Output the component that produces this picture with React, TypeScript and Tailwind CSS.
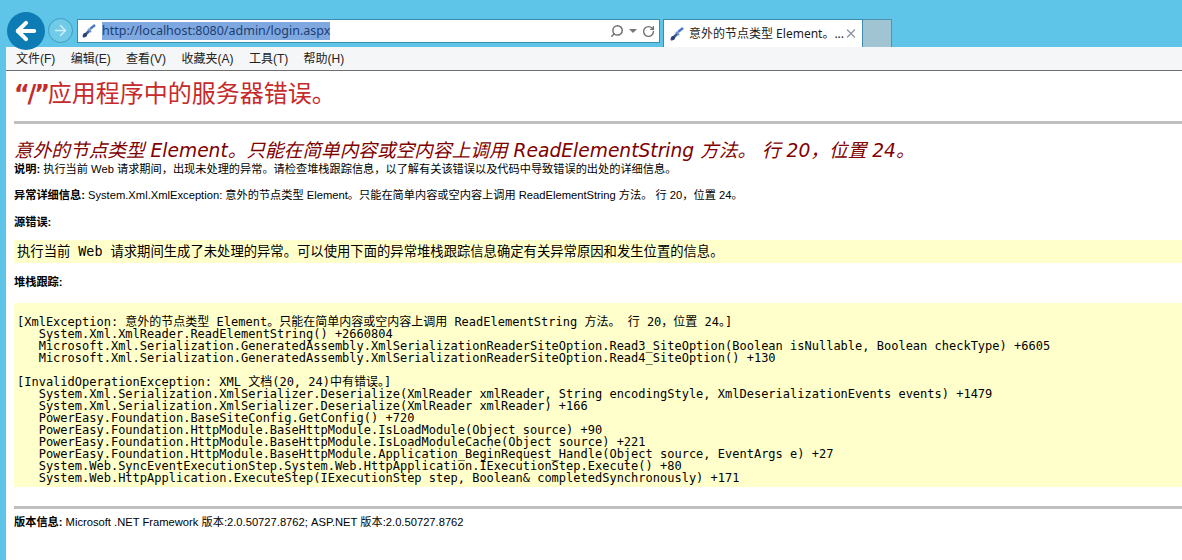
import { ArrowLeft, ArrowRight, RotateCw, Search, X } from "lucide-react";

const cjk = '"DejaVu Sans", "Noto Sans CJK SC", sans-serif';
const arial = '"Liberation Sans", "Noto Sans CJK SC", sans-serif';
const ui = '"Noto Sans", "Noto Sans CJK SC", sans-serif';
const mono = '"DejaVu Sans Mono", "Noto Sans CJK SC", monospace';

const menus = ["文件(F)", "编辑(E)", "查看(V)", "收藏夹(A)", "工具(T)", "帮助(H)"];

const stackLines = `
[XmlException: 意外的节点类型 Element。只能在简单内容或空内容上调用 ReadElementString 方法。 行 20，位置 24。]
   System.Xml.XmlReader.ReadElementString() +2660804
   Microsoft.Xml.Serialization.GeneratedAssembly.XmlSerializationReaderSiteOption.Read3_SiteOption(Boolean isNullable, Boolean checkType) +6605
   Microsoft.Xml.Serialization.GeneratedAssembly.XmlSerializationReaderSiteOption.Read4_SiteOption() +130

[InvalidOperationException: XML 文档(20, 24)中有错误。]
   System.Xml.Serialization.XmlSerializer.Deserialize(XmlReader xmlReader, String encodingStyle, XmlDeserializationEvents events) +1479
   System.Xml.Serialization.XmlSerializer.Deserialize(XmlReader xmlReader) +166
   PowerEasy.Foundation.BaseSiteConfig.GetConfig() +720
   PowerEasy.Foundation.HttpModule.BaseHttpModule.IsLoadModule(Object source) +90
   PowerEasy.Foundation.HttpModule.BaseHttpModule.IsLoadModuleCache(Object source) +221
   PowerEasy.Foundation.HttpModule.BaseHttpModule.Application_BeginRequest_Handle(Object source, EventArgs e) +27
   System.Web.SyncEventExecutionStep.System.Web.HttpApplication.IExecutionStep.Execute() +80
   System.Web.HttpApplication.ExecuteStep(IExecutionStep step, Boolean& completedSynchronously) +171`.trim();

// little IE page icon, the blue and dark strokes
const PageIcon = () => (
  <svg width="16" height="16" viewBox="0 0 16 16" className="shrink-0">
    <path d="M2 14 L6 10 L9 7" stroke="#3a5a9a" strokeWidth="2.5" fill="none" />
    <path d="M7 6 L10 9" stroke="#6f8fc8" strokeWidth="2" fill="none" />
    <path d="M9 6 L14 2" stroke="#4a78c8" strokeWidth="2.5" fill="none" />
    <circle cx="4" cy="12" r="2" fill="#27406f" />
  </svg>
);

export default function App() {
  return (
    <div
      className="w-[1182px] h-[560px] overflow-hidden bg-[#5fc5e8] flex flex-col"
      style={{ fontFamily: cjk }}
    >
      {/* browser toolbar */}
      <div className="h-[47px] shrink-0 flex items-start pl-[7px]">
        <div className="mt-[12px] w-[38px] h-[38px] rounded-full bg-[#0e7cb4] flex items-center justify-center z-10">
          <ArrowLeft size={28} strokeWidth={3.5} color="#fff" />
        </div>
        <div className="mt-[18px] ml-[3px] w-[25px] h-[25px] rounded-full border border-[#3f9cc2] bg-[#6fcbe8] flex items-center justify-center">
          <ArrowRight size={17} strokeWidth={2} color="#d3eef7" />
        </div>
        <div className="mt-[19px] ml-[4px] w-[583px] h-[24px] bg-white border border-[#3d8cad] flex items-center pl-[3px] pr-[4px]">
          <PageIcon />
          <span
            className="ml-[5px] bg-[#7fa8e0] text-[12.5px] leading-[18px] text-[#1c3f73] whitespace-nowrap"
            style={{ fontFamily: ui }}
          >
            http://localhost:8080/admin/login.aspx
          </span>
          <div className="ml-auto flex items-center gap-[3px] text-[#6f6f6f]">
            <Search size={14} strokeWidth={2.5} className="-scale-x-100" />
            <span className="w-0 h-0 border-x-[4px] border-x-transparent border-t-[4px] border-t-[#777] mx-[2px]" />
            <RotateCw size={13} strokeWidth={2.5} />
          </div>
        </div>
        <div
          className="mt-[19px] ml-[3px] w-[200px] h-[28px] bg-white border border-b-0 border-[#3d8cad] flex items-center pl-[5px] pr-[4px]"
          style={{ fontFamily: ui }}
        >
          <PageIcon />
          <span className="ml-[4px] text-[12px] text-[#1a1a1a] whitespace-nowrap">意外的节点类型 Element。...</span>
          <X size={15} strokeWidth={2.5} color="#8f9aa3" className="ml-auto" />
        </div>
        <div className="mt-[19px] w-[29px] h-[28px] bg-[#a0c4d2] border border-l-0 border-b-0 border-[#4d94ad]" />
      </div>

      {/* everything under the toolbar, with the window border at the left */}
      <div className="flex-1 ml-[6px] bg-white flex flex-col min-h-0">
        <div
          className="h-[24px] shrink-0 bg-[#f5f6f7] border-b border-[#6e6e6e] flex items-center pt-[1px] pl-[10px] gap-[15.4px] text-[12px] text-[#222]"
          style={{ fontFamily: arial }}
        >
          {menus.map((m) => (
            <span key={m}>{m}</span>
          ))}
        </div>

        <div className="pl-[8px] text-black">
          <h1 className="mt-[8px] text-[24px] leading-[30px] text-[#c62a2a] whitespace-nowrap">
            <span className="font-bold tracking-[-2.2px]">“/”</span>
            应用程序中的服务器错误。
          </h1>
          <div className="mt-[12px] h-[3px] bg-[#c0c0c0]" />
          <h2 className="mt-[15px] text-[18.67px] leading-[23px] italic text-[#800000] whitespace-nowrap">
            意外的节点类型 Element。只能在简单内容或空内容上调用 ReadElementString 方法。 行 20，位置 24。
          </h2>
          <div style={{ fontFamily: arial }}>
            <p className="text-[11.2px] leading-[14px] mt-0 whitespace-nowrap">
              <b>说明:</b> 执行当前 Web 请求期间，出现未处理的异常。请检查堆栈跟踪信息，以了解有关该错误以及代码中导致错误的出处的详细信息。
            </p>
            <p className="mt-[12px] text-[11.2px] leading-[14px] whitespace-nowrap">
              <b>异常详细信息:</b> System.Xml.XmlException: 意外的节点类型 Element。只能在简单内容或空内容上调用 ReadElementString 方法。 行 20，位置 24。
            </p>
            <p className="mt-[13px] text-[11.2px] leading-[14px] font-bold">源错误:</p>
          </div>
          <div
            className="mt-[11px] h-[23px] bg-[#ffffcc] pl-[3px] flex items-center text-[13.33px] whitespace-pre"
            style={{ fontFamily: mono }}
          >
            执行当前 Web 请求期间生成了未处理的异常。可以使用下面的异常堆栈跟踪信息确定有关异常原因和发生位置的信息。
          </div>
          <p className="mt-[12px] text-[11.2px] leading-[14px] font-bold" style={{ fontFamily: arial }}>
            堆栈跟踪:
          </p>
          <pre
            className="mt-[14px] h-[184px] bg-[#ffffcc] pl-[3px] pt-[13px] text-[12px] leading-[12px] whitespace-pre overflow-hidden"
            style={{ fontFamily: mono }}
          >
            {stackLines}
          </pre>
          <div className="mt-[19px] h-[3px] bg-[#c0c0c0]" />
          <p className="mt-[6px] text-[11.2px] leading-[14px] whitespace-nowrap" style={{ fontFamily: arial }}>
            <b>版本信息:</b> Microsoft .NET Framework 版本:2.0.50727.8762; ASP.NET 版本:2.0.50727.8762
          </p>
        </div>
      </div>
    </div>
  );
}
